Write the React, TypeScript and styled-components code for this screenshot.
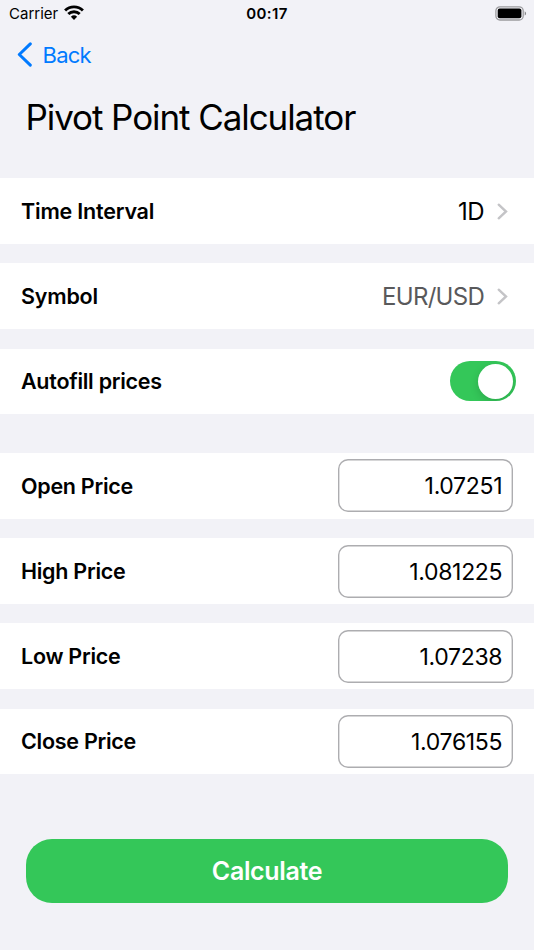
import React from "react";
import styled, { createGlobalStyle } from "styled-components";

const Global = createGlobalStyle`
  * { box-sizing: border-box; }
  body { margin: 0; background: #f2f2f7; font-family: Inter, sans-serif; color: #000; }
`;
const Screen = styled.main`
  width: 534px; height: 950px; display: flex; flex-direction: column; background: #f2f2f7; overflow: hidden;
`;
const StatusBar = styled.header`
  height: 28px; flex: none; display: grid; grid-template-columns: 1fr auto 1fr; align-items: center;
  padding: 0 7px 0 9px; font-size: 15px; line-height: 28px;
`;
const Carrier = styled.div`display: flex; align-items: center; gap: 6px;`;
const WifiIcon = styled.svg`margin-bottom: 3px;`;
const Label = styled.span<{ $track?: number }>`
  display: block; white-space: nowrap; letter-spacing: ${p => p.$track ?? 0}px;
`;
const Clock = styled.time`font-weight: 600; letter-spacing: 0.35px; padding-right: 2px;`;
const Battery = styled.svg`justify-self: end; margin-bottom: 1px;`;
const BackButton = styled.button`
  height: 52px; flex: none; border: 0; background: none; padding: 1px 0 0 16.5px; display: flex; align-items: center;
  gap: 11px; color: #007aff; font: 400 22px/52px Inter, sans-serif;
`;
const Title = styled.h1`
  margin: 0; height: 98.2px; flex: none; padding: 12px 26px 0 25.5px; font-size: 35px; line-height: 50px; font-weight: 400;
`;
const Group = styled.section<{ $gap?: number }>`
  display: flex; flex-direction: column; gap: 19.4px; margin-top: ${p => p.$gap ?? 0}px;
`;
const Row = styled.div`
  height: 65.8px; flex: none; background: #fff; display: flex; align-items: center; justify-content: space-between; padding: 0 21px;
`;
const RowName = styled.span<{ $track?: number }>`
  font-size: 21.5px; font-weight: 600; letter-spacing: ${p => p.$track ?? -0.27}px;
`;
const Choice = styled.div<{ $muted?: boolean }>`
  display: flex; align-items: center; gap: 13px; padding: 1px 5px 0 0; font-size: 24px;
  color: ${p => p.$muted ? "#59595b" : "#000"};
`;
const Toggle = styled.button`
  width: 66px; height: 40px; border: 0; border-radius: 20px; padding: 2px 2.7px 2px 2px; margin-right: -3px;
  background: #34c759; display: flex; align-items: center; justify-content: flex-end; overflow: hidden;
`;
const Knob = styled.span`
  width: 35.5px; height: 35.5px; border-radius: 50%; background: #fff; box-shadow: 0 3px 8px rgba(0, 0, 0, 0.15);
`;
const Price = styled.input`
  width: 175.4px; height: 53px; border: 0; border-radius: 10px; background: #fff;
  box-shadow: inset 0 0 0 1.4px #adadb0;
  text-align: right; padding: 1px 10.8px 0; font: 400 23px Inter, sans-serif; letter-spacing: -0.32px; color: #000;
`;
const Calculate = styled.button`
  margin: 64.4px 26px 0; height: 64.4px; flex: none; border: 0; border-radius: 26px; background: #34c759; color: #fff;
  font: 600 25px Inter, sans-serif; letter-spacing: -0.35px;
`;

const Chevron = () => (
  <svg width="11" height="17" viewBox="0 0 11 17" fill="none">
    <path d="M1.7 1.7 9 8.5 1.7 15.3" stroke="#c4c4c7" strokeWidth="2.4" strokeLinecap="round" strokeLinejoin="miter" />
  </svg>
);

const prices = [
  { name: "Open Price", value: "1.07251" },
  { name: "High Price", value: "1.081225" },
  { name: "Low Price", value: "1.07238" },
  { name: "Close Price", value: "1.076155" },
];

export default function App() {
  return (
    <>
      <Global />
      <Screen>
        <StatusBar>
          <Carrier>
            <Label>Carrier</Label>
            <WifiIcon width="20" height="15" viewBox="0 0 20 15" fill="none" stroke="#000" strokeWidth="2.9">
              <path d="M1.1 5.5a12.8 12.8 0 0 1 17.8 0M4.3 9a8.2 8.2 0 0 1 11.4 0" />
              <path d="M10 15 6.9 11.8a4.5 4.5 0 0 1 6.2 0Z" fill="#000" stroke="none" />
            </WifiIcon>
          </Carrier>
          <Clock>00:17</Clock>
          <Battery width="32" height="15" viewBox="0 0 32 15">
            <rect x=".9" y=".8" width="27.3" height="13.2" rx="4" fill="none" stroke="#9c9c9f" strokeWidth="1.3" />
            <rect x="2.7" y="2.6" width="23.7" height="9.6" rx="2" />
            <path d="M29.7 5.2v4.4c1.9-.8 1.9-3.6 0-4.4" fill="#88888b" />
          </Battery>
        </StatusBar>
        <BackButton>
          <svg width="15" height="25" viewBox="0 0 15 25" fill="none">
            <path d="M13.3 1.9 2.3 12.5 13.3 23.1" stroke="#007aff" strokeWidth="3" strokeLinecap="round" strokeLinejoin="round" />
          </svg>
          <Label $track={-0.75}>Back</Label>
        </BackButton>
        <Title><Label $track={-1.08}>Pivot Point Calculator</Label></Title>
        <Group>
          <Row><RowName $track={-0.2}>Time Interval</RowName><Choice><Label $track={-0.6}>1D</Label><Chevron /></Choice></Row>
          <Row><RowName $track={-0.2}>Symbol</RowName><Choice $muted><Label $track={-0.72}>EUR/USD</Label><Chevron /></Choice></Row>
          <Row><RowName>Autofill prices</RowName><Toggle role="switch" aria-checked="true"><Knob /></Toggle></Row>
        </Group>
        <Group $gap={38.6}>
          {prices.map(p => (
            <Row key={p.name}><RowName>{p.name}</RowName><Price defaultValue={p.value} /></Row>
          ))}
        </Group>
        <Calculate>Calculate</Calculate>
      </Screen>
    </>
  );
}
